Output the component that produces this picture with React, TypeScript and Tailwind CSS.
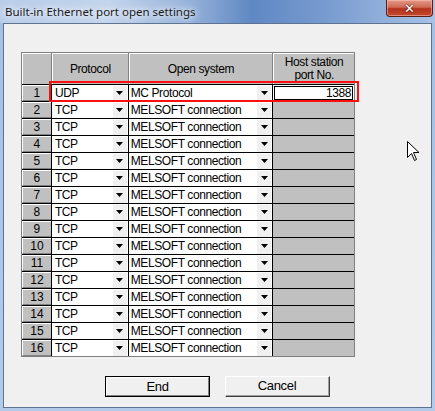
import React from "react";

const Arrow = () => (
  <div className="ml-auto mr-px flex h-[15px] w-[14px] items-center justify-center bg-[#f0f0f0]">
    <svg width="7" height="4" viewBox="0 0 7 4">
      <path d="M0 0H7L3.5 4Z" fill="#000" />
    </svg>
  </div>
);

export default function App() {
  const rows = Array.from({ length: 16 }, (_, i) => i + 1);
  return (
    <div className="relative h-[411px] w-[435px] overflow-hidden bg-[linear-gradient(180deg,#a4bfe2_0%,#b3cbe9_100%)] font-['Liberation_Sans',Arial,sans-serif] text-[12px] text-black">
      {/* title bar */}
      <div className="relative flex h-[23px] items-center bg-[linear-gradient(90deg,#b9cde9_0%,#c3d4ec_25%,#9cb6dc_42%,#5f88c3_58%,#7d9fd1_78%,#a9c2e5_100%)] pl-[5px]">
        <span className="font-['Noto_Sans',sans-serif] text-[11.5px] leading-none text-[#1b1b1b] [text-shadow:0_0_6px_#ffffff,0_0_10px_#ffffff]">
          Built-in Ethernet port open settings
        </span>
        <div className="absolute right-[2px] top-0 flex h-[17px] w-[47px] items-center justify-center rounded-b-[4px] border border-t-0 border-[#5a1d14] bg-[linear-gradient(180deg,#e29a88_0%,#d06a55_45%,#b4301b_55%,#c44a30_100%)] shadow-[inset_0_0_0_1px_rgba(255,200,190,0.5)]">
          <span className="font-['DejaVu_Sans',sans-serif] text-[13px] font-bold leading-none text-white [text-shadow:0_0_2px_#4a140c,0_0_1px_#4a140c]">
            ✕
          </span>
        </div>
      </div>

      {/* client area */}
      <div className="ml-[3px] h-[385px] w-[429px] border border-[#5e7392] bg-[#f0f0f0] pl-[17px] pt-[28px]">
        <div className="relative w-[334px] border border-[#808080] bg-[#000]">
          {/* header */}
          <div className="flex h-[31px] bg-[#808080]">
            <div className="w-[29px] border-l border-t border-white bg-[#c0c0c0]" />
            <div className="ml-px flex w-[76px] items-center justify-center border-l border-t border-white bg-[#c0c0c0] tracking-[-0.4px]">
              Protocol
            </div>
            <div className="ml-px flex w-[144px] items-center justify-center border-l border-t border-white bg-[#c0c0c0] tracking-[-0.4px]">
              Open system
            </div>
            <div className="ml-px flex w-[81px] flex-col items-center justify-center border-l border-t border-white bg-[#c0c0c0] text-center leading-[13px] tracking-[-0.4px]">
              <span>Host station</span>
              <span>port No.</span>
            </div>
          </div>
          {rows.map((n) => (
            <div key={n} className="mt-px flex h-[16px]">
              <div className="flex w-[29px] items-center justify-center border-l border-t border-white bg-[#c0c0c0] border-b border-b-[#808080] leading-none">
                {n}
              </div>
              <div className="ml-px flex w-[76px] items-center bg-white pl-[3px] leading-none tracking-[-0.4px]">
                <span>{n === 1 ? "UDP" : "TCP"}</span>
                <Arrow />
              </div>
              <div className="ml-px flex w-[144px] items-center bg-white pl-[2px] leading-none tracking-[-0.4px]">
                <span>{n === 1 ? "MC Protocol" : "MELSOFT connection"}</span>
                <Arrow />
              </div>
              {n === 1 ? (
                <div className="ml-px w-[81px] bg-white p-px">
                  <div className="flex h-full items-center justify-end border border-black pr-[1px] leading-none tracking-[-0.4px]">
                    1388
                  </div>
                </div>
              ) : (
                <div className="ml-px w-[81px] bg-[#c0c0c0]" />
              )}
            </div>
          ))}
          {/* red highlight */}
          <div className="absolute left-[27px] top-[28px] h-[21px] w-[310px] border-2 border-[#ff1010]" />
        </div>

        {/* buttons */}
        <div className="mt-[19px] ml-[-17px] flex justify-center gap-[15px]">
          <button className="h-[21px] w-[105px] border border-[#000] bg-[#f0f0f0] p-0">
            <div className="flex h-full w-full items-center justify-center border-b border-r border-l border-t border-b-[#808080] border-r-[#808080] border-l-white border-t-white text-[13px] tracking-[-0.3px]">
              End
            </div>
          </button>
          <button className="h-[21px] w-[105px] border border-b-[#404040] border-r-[#404040] border-l-white border-t-white bg-[#f0f0f0] p-0">
            <div className="flex h-full w-full items-center justify-center border-b border-r border-b-[#a0a0a0] border-r-[#a0a0a0] text-[13px] tracking-[-0.3px]">
              Cancel
            </div>
          </button>
        </div>
      </div>

      {/* mouse cursor */}
      <svg className="absolute left-[407px] top-[141px]" width="13" height="20" viewBox="0 0 13 20">
        <path d="M0.5 0.5V16.5L4.5 12.5L7.5 19.5L9.5 18.5L6.5 11.5H12L0.5 0.5Z" fill="#fff" stroke="#000" strokeWidth="1" />
      </svg>
    </div>
  );
}
